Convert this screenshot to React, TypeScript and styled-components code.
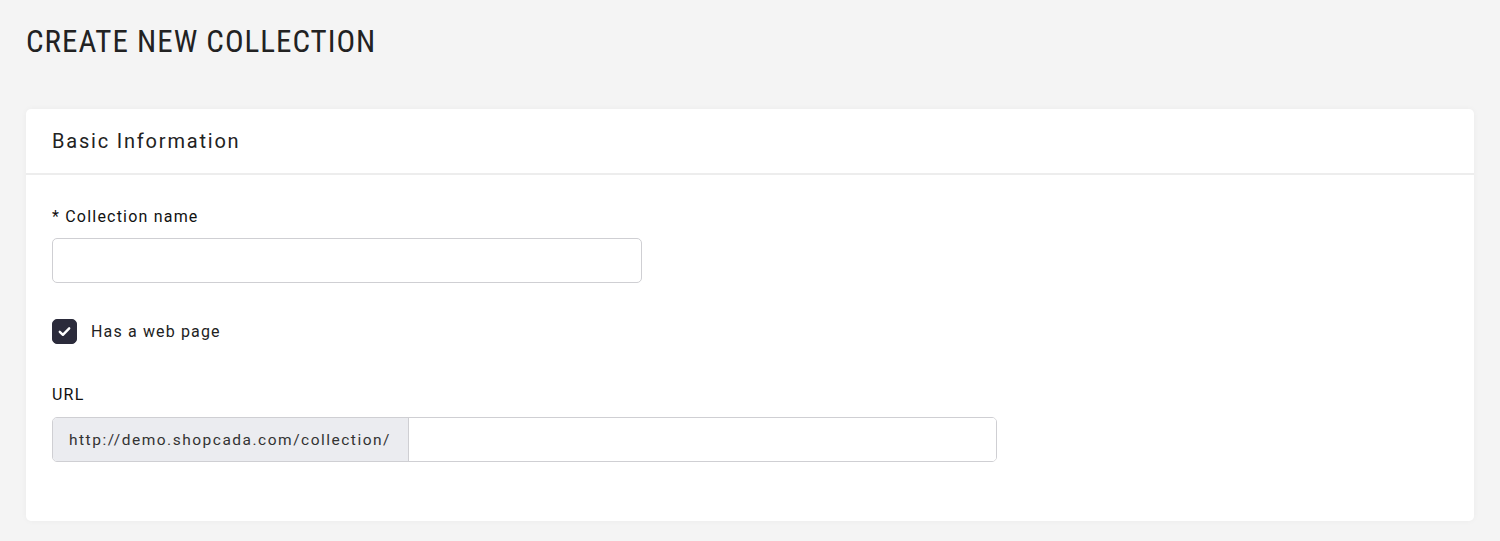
import { useState } from "react";
import styled, { createGlobalStyle } from "styled-components";

const GlobalStyle = createGlobalStyle`
  html, body {
    margin: 0;
    padding: 0;
    background: #f4f4f4;
  }
  body {
    font-family: Roboto, "Noto Sans", "Liberation Sans", sans-serif;
    color: #222;
  }
  * { box-sizing: border-box; }
`;

const Page = styled.div`
  padding: 26px 26px 20px 26px;
`;

const PageTitle = styled.h1`
  margin: 0 0 51px 0;
  font-family: "Roboto Condensed", "Liberation Sans Narrow", Roboto, sans-serif;
  font-weight: 400;
  font-size: 31px;
  line-height: 32px;
  letter-spacing: 1px;
  color: #222;
  white-space: nowrap;
`;

const Card = styled.div`
  background: #fff;
  border-radius: 5px;
  box-shadow: 0 0 6px rgba(0, 0, 0, 0.04);
`;

const CardHeader = styled.div`
  height: 66px;
  display: flex;
  align-items: center;
  padding: 0 26px;
  border-bottom: 2px solid #ededed;
  font-size: 20px;
  letter-spacing: 1.8px;
  color: #222;
`;

const CardBody = styled.div`
  padding: 33px 26px 59px 26px;
  display: flex;
  flex-direction: column;
`;

const Field = styled.div<{ $gap?: number }>`
  display: flex;
  flex-direction: column;
  margin-bottom: ${(p) => p.$gap ?? 0}px;
`;

const Label = styled.label<{ $space?: number }>`
  font-size: 16px;
  font-weight: 400;
  letter-spacing: 1.2px;
  line-height: 18px;
  margin-bottom: ${(p) => p.$space ?? 12}px;
  color: #111;
`;

const TextInput = styled.input<{ $width: number }>`
  width: ${(p) => p.$width}px;
  height: 45px;
  border: 1px solid #cfcfd3;
  border-radius: 5px;
  padding: 0 14px;
  font-size: 15px;
  outline: none;
`;

const CheckRow = styled.label`
  display: flex;
  align-items: center;
  gap: 14px;
  margin-bottom: 42px;
  cursor: pointer;
  font-size: 16px;
  letter-spacing: 1.15px;
  color: #222;
`;

const CheckBox = styled.span<{ $on: boolean }>`
  width: 25px;
  height: 25px;
  border-radius: 5px;
  background: ${(p) => (p.$on ? "#2b2b3b" : "#fff")};
  border: 1px solid ${(p) => (p.$on ? "#2b2b3b" : "#cfcfd3")};
  display: flex;
  align-items: center;
  justify-content: center;
`;

const InputGroup = styled.div`
  display: flex;
  width: 945px;
  height: 45px;
  border: 1px solid #cfcfd3;
  border-radius: 5px;
  overflow: hidden;
`;

const Addon = styled.span`
  display: flex;
  align-items: center;
  padding: 0 17px 0 16px;
  background: #ebecf0;
  border-right: 1px solid #cfcfd3;
  font-size: 15.5px;
  letter-spacing: 1.5px;
  color: #333;
  white-space: nowrap;
`;

const GroupInput = styled.input`
  flex: 1;
  border: none;
  outline: none;
  padding: 0 14px;
  font-size: 15px;
`;

export default function App() {
  const [hasPage, setHasPage] = useState(true);
  return (
    <>
      <GlobalStyle />
      <Page>
        <PageTitle>CREATE NEW COLLECTION</PageTitle>
        <Card>
          <CardHeader>Basic Information</CardHeader>
          <CardBody>
            <Field $gap={36}>
              <Label>* Collection name</Label>
              <TextInput $width={590} />
            </Field>
            <CheckRow onClick={() => setHasPage(!hasPage)}>
              <CheckBox $on={hasPage}>
                {hasPage && (
                  <svg width="13" height="11" viewBox="0 0 13 11">
                    <path
                      d="M1.8 5.8 L4.9 8.8 L11.2 2.3"
                      fill="none"
                      stroke="#fff"
                      strokeWidth="2.4"
                      strokeLinecap="round"
                      strokeLinejoin="round"
                    />
                  </svg>
                )}
              </CheckBox>
              Has a web page
            </CheckRow>
            <Field>
              <Label $space={13}>URL</Label>
              <InputGroup>
                <Addon>http://demo.shopcada.com/collection/</Addon>
                <GroupInput />
              </InputGroup>
            </Field>
          </CardBody>
        </Card>
      </Page>
    </>
  );
}
